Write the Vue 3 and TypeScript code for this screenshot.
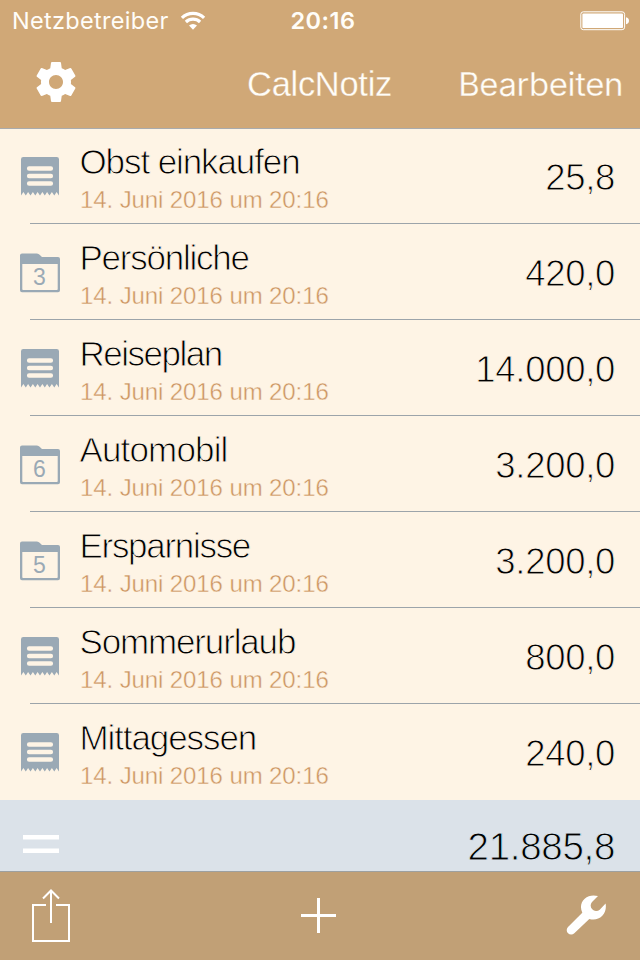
<script setup lang="ts">
interface Note {
  title: string
  amount: string
  tracking: number
  count?: number
}

const stamp = '14. Juni 2016 um 20:16'
const notes: Note[] = [
  { title: 'Obst einkaufen', amount: '25,8', tracking: -1.1 },
  { title: 'Persönliche', amount: '420,0', tracking: -1.25, count: 3 },
  { title: 'Reiseplan', amount: '14.000,0', tracking: -1.5 },
  { title: 'Automobil', amount: '3.200,0', tracking: -0.85, count: 6 },
  { title: 'Ersparnisse', amount: '3.200,0', tracking: -1.3, count: 5 },
  { title: 'Sommerurlaub', amount: '800,0', tracking: -1.15 },
  { title: 'Mittagessen', amount: '240,0', tracking: -1.1 },
]
</script>

<template>
  <div class="screen">
    <header class="header">
      <div class="status">
        <div class="carrier">
          <span class="carrier-name">Netzbetreiber</span>
          <svg class="wifi" viewBox="0 0 26 20">
            <path d="M1.900 6.800a16 16 0 0 1 22.200 0M5.900 11a10.300 10.300 0 0 1 14.200 0" />
            <path class="dot" d="M13 18.800l-4-4.200a6 6 0 0 1 8 0z" />
          </svg>
        </div>
        <span class="clock">20:16</span>
        <svg class="battery" viewBox="0 0 50 20">
          <rect class="shell" x="0.8" y="0.8" width="43.8" height="17.9" rx="2.5" />
          <rect x="2.4" y="2.4" width="40.6" height="14.7" rx="1.2" />
          <path d="M46 6.300c4 .4 4 6.500 0 6.900z" />
        </svg>
      </div>
      <nav class="nav">
        <svg class="gear" viewBox="0 0 24 24">
          <path d="M19.43 12.98c.04-.32.07-.64.07-.98s-.03-.66-.07-.98l2.110-1.650c.19-.15.24-.42.12-.64l-2-3.460c-.12-.22-.39-.3-.61-.22l-2.490 1c-.52-.4-1.080-.73-1.690-.98l-.38-2.650C14.46 2.180 14.250 2 14 2h-4c-.25 0-.46.18-.49.42l-.38 2.650c-.61.25-1.170.59-1.690.98l-2.490-1c-.23-.09-.49 0-.61.22l-2 3.460c-.13.22-.07.49.12.64l2.110 1.650c-.04.32-.07.65-.07.98s.03.66.07.98l-2.110 1.650c-.19.15-.24.42-.12.64l2 3.460c.12.22.39.3.61.22l2.490-1c.52.4 1.080.73 1.690.98l.38 2.650c.03.24.24.42.49.42h4c.25 0 .46-.18.49-.42l.38-2.650c.61-.25 1.170-.59 1.690-.98l2.490 1c.23.09.49 0 .61-.22l2-3.460c.12-.22.07-.49-.12-.64l-2.110-1.650zM12 15.500c-1.930 0-3.500-1.570-3.500-3.500s1.570-3.500 3.500-3.500 3.500 1.570 3.500 3.500-1.570 3.500-3.500 3.500z" />
        </svg>
        <h1 class="title">CalcNotiz</h1>
        <span class="edit">Bearbeiten</span>
      </nav>
    </header>

    <main class="list">
      <div v-for="note in notes" :key="note.title" class="row">
        <div class="icon">
          <template v-if="note.count">
            <svg class="glyph" viewBox="0 0 40 40">
              <path fill-rule="evenodd" d="M2 .4H16.500Q18 .4 19.300 1.600L22 4.100H38Q40 4.100 40 6.100V37.300Q40 39.300 38 39.300H2Q0 39.300 0 37.300V2.400Q0 .4 2 .4ZM2.300 11V36.200Q2.300 37 3.100 37H36.900Q37.700 37 37.700 36.200V11Z" />
            </svg>
            <span class="count">{{ note.count }}</span>
          </template>
          <svg v-else class="glyph" viewBox="0 0 40 40">
            <path d="M3.300 0H36.700Q39 0 39 2.300V38.500L36.600 35L34.300 38.500L31.900 35L29.500 38.500L27.100 35L24.800 38.500L22.400 35L20 38.500L17.600 35L15.300 38.500L12.900 35L10.500 38.500L8.100 35L5.800 38.500L3.400 35L1 38.500V2.300Q1 0 3.300 0Z" />
            <path class="lines" d="M9.100 11.500H30.900M9.100 19H30.900M9.100 26.500H30.900" />
          </svg>
        </div>
        <div class="body">
          <div class="text">
            <span class="name" :style="{ letterSpacing: note.tracking + 'px' }">{{ note.title }}</span>
            <span class="date">{{ stamp }}</span>
          </div>
          <span class="amount">{{ note.amount }}</span>
        </div>
      </div>
    </main>

    <section class="total">
      <svg class="equals" viewBox="0 0 36 18">
        <path d="M0 0H36V4.500H0zM0 13.500H36V18H0z" />
      </svg>
      <span class="amount sum">21.885,8</span>
    </section>

    <footer class="toolbar">
      <svg class="share" viewBox="0 0 38 53">
        <path d="M14 16H1V52H37V16H24M19 34V2M11 9.500L19 1.500L27 9.500" />
      </svg>
      <svg class="plus" viewBox="0 0 35 35">
        <path d="M16 0H19V16H35V19H19V35H16V19H0V16H16z" />
      </svg>
      <svg class="wrench" viewBox="566 894.500 41 41">
        <path d="M598 895.600L592 901.400A5.500 5.500 0 0 0 599.700 909.200L605.600 903.100C606.400 907.400 605.500 912 602.300 915.300C598.700 918.900 593.900 919.900 589.300 918.400L574.300 932.700A4.100 4.100 0 0 1 568 926.500L582.300 912.200C580 907.400 580.600 902 584.700 898.300C588.300 895 593.200 894.300 598 895.600Z" />
      </svg>
    </footer>
  </div>
</template>

<style>
body {
  margin: 0;
}
</style>

<style scoped>
.screen {
  width: 640px;
  height: 960px;
  display: flex;
  flex-direction: column;
  overflow: hidden;
  background: #fef4e5;
  font-family: "Liberation Sans", Arial, sans-serif;
  white-space: nowrap;
}
svg {
  display: block;
  flex: none;
  fill: #fff;
}
.header {
  height: 128px;
  flex: none;
  box-sizing: border-box;
  background: #d0a877;
  color: #fffdf8;
  box-shadow: 0 1px 0 #a9abad;
  position: relative;
}
.status {
  height: 40px;
  display: grid;
  grid-template-columns: 1fr auto 1fr;
  align-items: center;
  padding: 0 10px 0 12px;
  font-family: Inter, sans-serif;
}
.carrier {
  display: flex;
  align-items: center;
  gap: 11px;
}
.carrier-name {
  font-size: 23.5px;
  line-height: 40px;
  padding-top: 1px;
  letter-spacing: 0.3px;
}
.wifi {
  width: 26px;
  height: 20px;
}
.wifi path {
  fill: none;
  stroke: #fff;
  stroke-width: 3.200;
}
.wifi .dot {
  fill: #fff;
  stroke: none;
}
.clock {
  font-size: 23.5px;
  font-weight: 600;
  letter-spacing: 0.5px;
  padding-left: 4px;
}
.battery {
  width: 50px;
  height: 20px;
  justify-self: end;
}
.battery .shell {
  fill: none;
  stroke: #fff;
  stroke-width: 1;
}
.nav {
  height: 88px;
  display: grid;
  grid-template-columns: minmax(0, 1fr) auto minmax(0, 1fr);
  align-items: center;
  padding: 0 17px 0 32px;
}
.gear {
  width: 48px;
  height: 48px;
  margin-bottom: 4px;
}
.title {
  margin: 0 16px 0 0;
  font-size: 34.5px;
  font-weight: 400;
  letter-spacing: -0.3px;
  -webkit-text-stroke: 0.3px #d0a877;
}
.edit {
  justify-self: end;
  font-family: Inter, sans-serif;
  font-size: 33px;
  letter-spacing: -0.45px;
  -webkit-text-stroke: 0.3px #d0a877;
}
.list {
  flex: none;
}
.row {
  height: 96px;
  display: flex;
}
.icon {
  position: relative;
  width: 40px;
  height: 40px;
  margin: 29px 0 0 20px;
  flex: none;
}
.glyph {
  width: 40px;
  height: 40px;
  fill: #9aa9b5;
}
.lines {
  stroke: #fef4e5;
  stroke-width: 4.400;
  stroke-linecap: round;
}
.count {
  position: absolute;
  inset: 11px 1px 2px 0;
  font-size: 23px;
  line-height: 27px;
  text-align: center;
  color: #9aa9b5;
}
.body {
  flex: 1;
  display: flex;
  justify-content: space-between;
  margin-left: -30px;
  padding: 0 25px 0 49.5px;
  border-bottom: 1px solid #9ca4aa;
}
.row:last-child .body {
  border-bottom-color: transparent;
}
.text {
  display: flex;
  flex-direction: column;
  padding-top: 13px;
}
.name {
  font-size: 35px;
  line-height: 42px;
  color: #000;
  -webkit-text-stroke: 0.9px #fef4e5;
}
.date {
  font-size: 24px;
  line-height: 34px;
  padding-left: 0.5px;
  letter-spacing: -0.1px;
  color: #cc9560;
  -webkit-text-stroke: 0.4px #fef4e5;
}
.amount {
  font-size: 36.5px;
  line-height: 42px;
  padding-top: 29px;
  letter-spacing: -0.300px;
  color: #000;
  -webkit-text-stroke: 0.9px #fef4e5;
}
.total {
  height: 71px;
  flex: none;
  display: flex;
  justify-content: space-between;
  align-items: flex-start;
  padding: 0 25px 0 23px;
  background: #dbe2e9;
}
.equals {
  width: 36px;
  height: 18px;
  margin-top: 35px;
}
.sum {
  padding-top: 26px;
  font-size: 38.5px;
  -webkit-text-stroke-color: #dbe2e9;
}
.toolbar {
  height: 89px;
  flex: none;
  box-sizing: border-box;
  display: flex;
  justify-content: space-between;
  align-items: center;
  padding: 0 33px 1px 32px;
  background: #c1a076;
  border-top: 1px solid #9da0a0;
}
.share {
  width: 38px;
  height: 53px;
}
.share path {
  fill: none;
  stroke: #fff;
  stroke-width: 2;
}
.plus {
  width: 35px;
  height: 35px;
}
.wrench {
  width: 41px;
  height: 41px;
}
</style>
